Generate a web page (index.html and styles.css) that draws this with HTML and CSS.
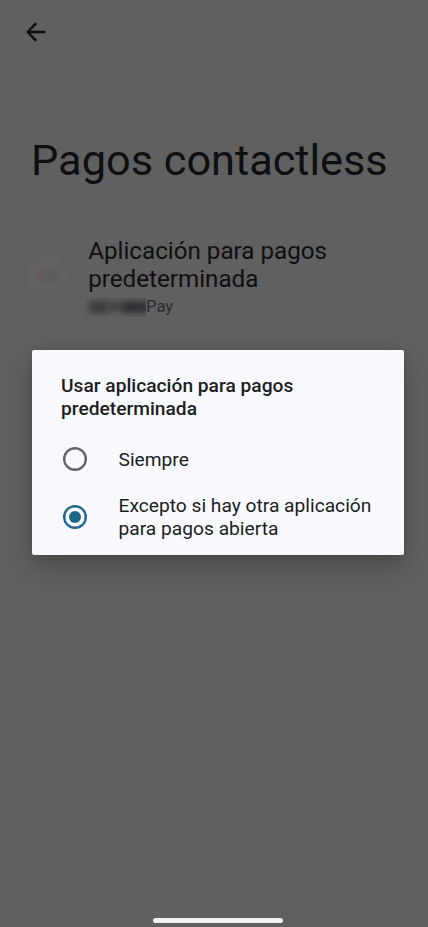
FILE: index.html
```html
<!DOCTYPE html>
<html lang="es">
<head>
<meta charset="utf-8">
<title>Pagos contactless</title>
<link rel="stylesheet" href="styles.css">
</head>
<body>
<main class="screen">
  <svg class="back" width="24" height="24" viewBox="0 0 24 24"><path d="M21.4 12H4M12.2 3.1L3.6 12l8.6 8.9" fill="none" stroke="#0c0d0e" stroke-width="2.3"/></svg>
  <h1 class="title">Pagos contactless</h1>
  <section class="preference">
    <div class="app-icon"><span class="mark red"></span><span class="mark gray"></span></div>
    <div>
      <h2 class="pref-title">Aplicación para pagos<br>predeterminada</h2>
      <p class="pref-summary"><span class="hidden-name"><i class="blot a"></i><i class="blot b"></i><i class="blot c"></i></span><span>Pay</span></p>
    </div>
  </section>
  <section class="dialog" role="dialog">
    <h3 class="dialog-title">Usar aplicación para pagos<br>predeterminada</h3>
    <div class="option first">
      <span class="radio"></span>
      <span>Siempre</span>
    </div>
    <div class="option">
      <span class="radio checked"></span>
      <span>Excepto si hay otra aplicación<br>para pagos abierta</span>
    </div>
  </section>
  <div class="home-bar"></div>
</main>
</body>
</html>
```

FILE: styles.css
```css
* { box-sizing: border-box; }
body { margin: 0; font-family: Roboto, sans-serif; background: #606060; }
h1, h2, h3, p { margin: 0; font-weight: 400; }
.screen { display: flex; flex-direction: column; width: 428px; height: 927px; overflow: hidden; color: #0e0f10; }
.back { display: block; flex: none; margin: 20px 0 0 23.5px; }
.title { margin: 92px 0 0 31px; font-size: 43.3px; line-height: 50px; white-space: nowrap; }
.preference { display: flex; height: 113px; margin-top: 51px; padding-left: 28px; flex: none; }
.app-icon { display: flex; align-items: center; justify-content: center; gap: 3px; width: 38px; height: 38px; margin: 19px 22.5px 0 0; border-radius: 50%; background: #646363; filter: blur(2.5px); }
.mark { width: 6px; height: 13px; background: #5d5757; }
.mark.red { background: #675757; }
.mark.gray { width: 12px; background: #5b5959; }
.pref-title { margin-left: -.3px; font-size: 24.2px; line-height: 28.3px; white-space: nowrap; }
.pref-summary { display: flex; margin-top: 3.4px; font-size: 16.6px; line-height: 20px; color: #292a2d; }
.hidden-name { display: flex; align-items: center; width: 61.5px; height: 20px; margin-left: -4px; padding-left: 4px; overflow: hidden; }
.blot { flex: none; height: 12px; background: #3a3b3d; filter: blur(3px); }
.blot.a { width: 19px; }
.blot.b { width: 14px; height: 9px; background: #3c3d3f; }
.blot.c { width: 27px; height: 12px; background: #303134; }
.dialog { flex: none; width: 372px; height: 205px; margin-left: 32px; padding: 24px 28px 0 29px; border-radius: 2px; background: #f8f9fe; color: #1c1d20; font-size: 19.2px; line-height: 23px; box-shadow: 0 12px 24px rgba(0,0,0,.22), 0 0 8px rgba(0,0,0,.1); white-space: nowrap; }
.dialog-title { font-size: 19.2px; font-weight: 500; }
.option { display: flex; align-items: center; gap: 31.5px; margin-top: 22.5px; padding-left: 2px; }
.option.first { margin-top: 27px; }
.radio { display: grid; place-items: center; flex: none; width: 24px; height: 24px; border: 2px solid #616164; border-radius: 50%; box-shadow: inset 0 0 0 .4px #616164; }
.radio.checked { border-color: #1e668a; box-shadow: inset 0 0 0 .4px #1e668a; }
.radio.checked::after { content: ""; width: 12px; height: 12px; border-radius: 50%; background: #1e668a; }
.home-bar { flex: none; width: 130px; height: 5px; margin: auto auto 4px 153px; border-radius: 3px; background: #f3f3f3; }
```
